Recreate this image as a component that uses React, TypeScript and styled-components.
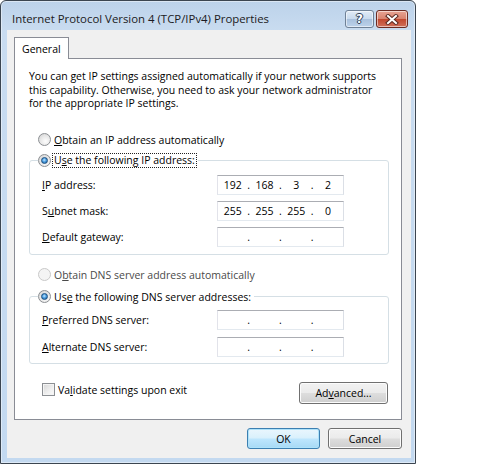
import { Fragment } from "react";
import styled, { createGlobalStyle } from "styled-components";

const GlobalStyle = createGlobalStyle`
  html, body {
    margin: 0;
    background: #fff;
  }
  body {
    font-family: "Segoe UI", "Open Sans", "Noto Sans", sans-serif;
    font-size: 10.5px;
    color: #000;
  }
`;

interface MnemonicProps {
  pre: string;
  k: string;
  post: string;
}

interface IpRow {
  pre: string;
  k: string;
  post: string;
  value: string[];
}

const empty = ["", "", "", ""];

const ipRows: IpRow[] = [
  { pre: "", k: "I", post: "P address:", value: ["192", "168", "3", "2"] },
  { pre: "S", k: "u", post: "bnet mask:", value: ["255", "255", "255", "0"] },
  { pre: "", k: "D", post: "efault gateway:", value: empty },
];

const dnsRows: IpRow[] = [
  { pre: "", k: "P", post: "referred DNS server:", value: empty },
  { pre: "", k: "A", post: "lternate DNS server:", value: empty },
];

function Mnemonic({ pre, k, post }: MnemonicProps) {
  return (
    <>
      {pre}
      <Key>{k}</Key>
      {post}
    </>
  );
}

function IpField({ value }: { value: string[] }) {
  return (
    <IpBox>
      {value.map((v, idx) => (
        <Fragment key={`part_${idx}`}>
          <IpPart>{v}</IpPart>
          {idx < 3 && <IpDot>.</IpDot>}
        </Fragment>
      ))}
    </IpBox>
  );
}

function AddressGroup({ rows, dns }: { rows: IpRow[]; dns?: boolean }) {
  return (
    <Rows $dns={dns}>
      {rows.map((r, idx) => (
        <Fragment key={`row_${idx}`}>
          <FieldLabel>
            <Mnemonic pre={r.pre} k={r.k} post={r.post} />
          </FieldLabel>
          <IpField value={r.value} />
        </Fragment>
      ))}
    </Rows>
  );
}

function CloseGlyph() {
  return (
    <svg width="14" height="11" viewBox="0 0 14 11">
      <path d="M3 2 L11 9 M11 2 L3 9" stroke="#5b2a22" strokeWidth="4" strokeLinecap="square" />
      <path d="M3 2 L11 9 M11 2 L3 9" stroke="#fff" strokeWidth="2" strokeLinecap="square" />
    </svg>
  );
}

export default function App() {
  return (
    <>
      <GlobalStyle />
      <Window>
        <TitleBar>
          <Title>Internet Protocol Version 4 (TCP/IPv4) Properties</Title>
          <CaptionButtons>
            <HelpButton>?</HelpButton>
            <CloseButton>
              <CloseGlyph />
            </CloseButton>
          </CaptionButtons>
        </TitleBar>
        <Client>
          <TabStrip>
            <Tab>General</Tab>
          </TabStrip>
          <Panel>
            <Description>
              You can get IP settings assigned automatically if your network supports
              this capability. Otherwise, you need to ask your network administrator
              for the appropriate IP settings.
            </Description>

            <RadioRow $top={21}>
              <Radio />
              <span>
                <Key>O</Key>btain an IP address automatically
              </span>
            </RadioRow>
            <Group $top={5}>
              <Legend>
                <Radio $checked />
                <FocusText>
                  U<Key>s</Key>e the following IP address:
                </FocusText>
              </Legend>
              <AddressGroup rows={ipRows} />
            </Group>

            <RadioRow $top={12} $disabled>
              <Radio $disabled />
              <span>
                O<Key>b</Key>tain DNS server address automatically
              </span>
            </RadioRow>
            <Group $top={6}>
              <Legend>
                <Radio $checked />
                <LegendText>
                  Us<Key>e</Key> the following DNS server addresses:
                </LegendText>
              </Legend>
              <AddressGroup rows={dnsRows} dns />
            </Group>

            <BottomRow>
              <CheckRow>
                <CheckBox />
                <span>
                  Va<Key>l</Key>idate settings upon exit
                </span>
              </CheckRow>
              <PushButton $width={89} $height={22}>
                Ad<Key>v</Key>anced...
              </PushButton>
            </BottomRow>
          </Panel>
          <Footer>
            <PushButton $width={73} $default>
              OK
            </PushButton>
            <PushButton $width={74}>Cancel</PushButton>
          </Footer>
        </Client>
      </Window>
    </>
  );
}

const Window = styled.div`
  width: 416px;
  height: 464px;
  box-sizing: border-box;
  border: 1px solid #3b4550;
  border-radius: 6px 6px 0 0;
  background: linear-gradient(to bottom, #bcd2ea 0px, #c9dcf0 30px, #c3d9f0 100%);
  box-shadow: inset 0 0 0 1px rgba(255, 255, 255, 0.45);
  display: flex;
  flex-direction: column;
`;

const TitleBar = styled.div`
  height: 29px;
  box-sizing: border-box;
  padding: 9px 7px 0 11px;
  display: flex;
  align-items: flex-start;
`;

const Title = styled.div`
  flex: 1;
  line-height: 18px;
  font-size: 11.4px;
  color: #1b1a22;
`;

const CaptionButtons = styled.div`
  display: flex;
  gap: 2px;
`;

const CaptionButton = styled.div`
  height: 18px;
  box-sizing: border-box;
  border-radius: 3px;
  display: flex;
  align-items: center;
  justify-content: center;
  box-shadow: inset 0 0 0 1px rgba(255, 255, 255, 0.55);
`;

const HelpButton = styled(CaptionButton)`
  width: 29px;
  border: 1px solid #6f8196;
  background: linear-gradient(to bottom, #e1ebf6 0%, #c9dbee 48%, #a9c1dd 52%, #bcd2ea 100%);
  color: #fff;
  font-family: "DejaVu Sans", sans-serif;
  font-weight: bold;
  font-size: 12px;
  text-shadow: 0 0 1px #31435a, 1px 0 0 #31435a, -1px 0 0 #31435a, 0 1px 0 #31435a, 0 -1px 0 #31435a;
`;

const CloseButton = styled(CaptionButton)`
  width: 32px;
  border: 1px solid #6b2b22;
  background: linear-gradient(to bottom, #e8a493 0%, #d98470 48%, #c2482f 52%, #d0705a 100%);
`;

const Client = styled.div`
  flex: 1;
  margin: 0 4px 5px 6px;
  background: #f0f0f0;
  padding: 7px 9px 0 7px;
  display: flex;
  flex-direction: column;
`;

const TabStrip = styled.div`
  display: flex;
  margin-bottom: -1px;
`;

const Tab = styled.div`
  position: relative;
  z-index: 1;
  height: 22px;
  box-sizing: border-box;
  padding: 3px 7px 0 7px;
  border: 1px solid #898c95;
  border-bottom: none;
  background: #fff;
  line-height: 16px;
`;

const Panel = styled.div`
  height: 362px;
  box-sizing: border-box;
  border: 1px solid #898c95;
  background: #fff;
  padding: 11px 12px 0 14px;
  display: flex;
  flex-direction: column;
`;

const Description = styled.p`
  margin: 0;
  line-height: 13.5px;
`;

const Key = styled.u`
  text-decoration: underline;
  text-underline-offset: 1px;
`;

const RadioRow = styled.div<{ $top: number; $disabled?: boolean }>`
  margin-top: ${(p) => p.$top}px;
  margin-left: 9px;
  height: 16px;
  display: flex;
  align-items: center;
  gap: 3px;
  color: ${(p) => (p.$disabled ? "#4a4a4a" : "#000")};
`;

const Radio = styled.span<{ $checked?: boolean; $disabled?: boolean }>`
  width: 13px;
  height: 13px;
  box-sizing: border-box;
  border-radius: 50%;
  flex-shrink: 0;
  border: 1px solid ${(p) => (p.$disabled ? "#c9c9c9" : "#8c8f93")};
  background: ${(p) =>
    p.$disabled
      ? "#f4f4f4"
      : "radial-gradient(circle at 60% 65%, #fdfdfd 0, #e6e6e6 55%, #cdcdcd 100%)"};
  display: flex;
  align-items: center;
  justify-content: center;

  &::after {
    content: "";
    display: ${(p) => (p.$checked ? "block" : "none")};
    width: 7px;
    height: 7px;
    border-radius: 50%;
    box-sizing: border-box;
    border: 1px solid #1d4f7f;
    background: radial-gradient(circle at 45% 40%, #c6e8ff 0, #4c9ee0 45%, #1a5d9a 100%);
  }
`;

const Group = styled.fieldset<{ $top: number }>`
  margin: ${(p) => p.$top}px 0 0;
  padding: 0;
  border: 1px solid #d5dfe5;
  border-radius: 3px;
  min-width: 0;
`;

const Legend = styled.legend`
  margin-left: 8px;
  padding: 0 2px 0 0;
  height: 16px;
  display: flex;
  align-items: center;
  gap: 2px;
`;

const FocusText = styled.span`
  outline: 1px dotted #222;
  outline-offset: 0;
  padding: 0 1px;
  line-height: 13px;
`;

const LegendText = styled.span`
  padding: 0 1px;
`;

const Rows = styled.div<{ $dns?: boolean }>`
  display: grid;
  grid-template-columns: 175px 127px;
  grid-auto-rows: 20px;
  row-gap: ${(p) => (p.$dns ? 7 : 6)}px;
  padding: ${(p) => (p.$dns ? "5px 0 6px 12px" : "6px 0 7px 12px")};
`;

const FieldLabel = styled.div`
  display: flex;
  align-items: center;
`;

const IpBox = styled.div`
  box-sizing: border-box;
  height: 20px;
  border: 1px solid;
  border-color: #abadb3 #dbdfe6 #e3e9ef #e2e3ea;
  background: #fff;
  padding: 0 2px;
  display: grid;
  grid-template-columns: 1fr 6px 1fr 6px 1fr 6px 1fr;
  align-items: center;
`;

const IpPart = styled.span`
  text-align: center;
`;

const IpDot = styled.span`
  text-align: center;
`;

const BottomRow = styled.div`
  margin-top: 18px;
  display: flex;
  justify-content: space-between;
  align-items: flex-start;
  padding-right: 1px;
`;

const CheckRow = styled.div`
  margin-left: 13px;
  height: 16px;
  display: flex;
  align-items: center;
  gap: 3px;
`;

const CheckBox = styled.span`
  width: 13px;
  height: 13px;
  box-sizing: border-box;
  border: 1px solid #8c8f93;
  background: linear-gradient(135deg, #d6d6d6 0%, #f0f0f0 60%, #fbfbfb 100%);
  box-shadow: inset 0 0 0 1px #f4f4f4;
`;

const PushButton = styled.div<{ $width: number; $height?: number; $default?: boolean }>`
  width: ${(p) => p.$width}px;
  height: ${(p) => p.$height ?? 21}px;
  box-sizing: border-box;
  border: 1px solid ${(p) => (p.$default ? "#3c7fb1" : "#707070")};
  border-radius: 3px;
  background: ${(p) =>
    p.$default
      ? "linear-gradient(to bottom, #eaf6fd 0%, #d9f0fc 48%, #bee6fd 52%, #a7d9f5 100%)"
      : "linear-gradient(to bottom, #f2f2f2 0%, #ebebeb 48%, #dddddd 52%, #cfcfcf 100%)"};
  box-shadow: inset 0 0 0 1px ${(p) => (p.$default ? "#aee2fa" : "#fcfcfc")};
  display: flex;
  align-items: center;
  justify-content: center;
`;

const Footer = styled.div`
  margin-top: 8px;
  display: flex;
  justify-content: flex-end;
  gap: 8px;
`;
